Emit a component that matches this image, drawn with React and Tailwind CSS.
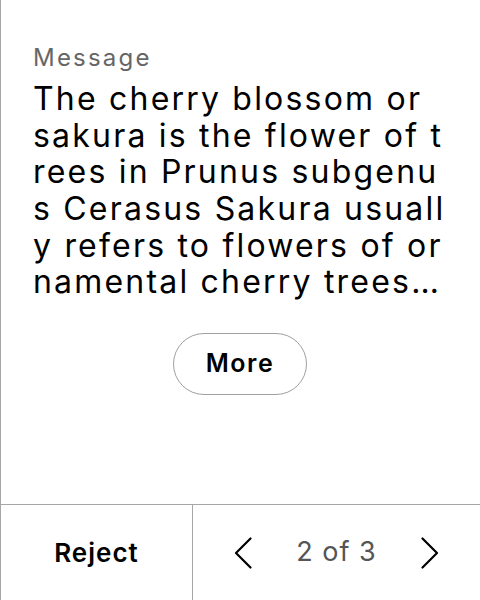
import React from "react";

const message =
  "The cherry blossom or sakura is the flower of trees in Prunus subgenus Cerasus Sakura usually refers to flowers of ornamental cherry trees, such as the Yoshino cherry, which are planted in Japan and many other places.";

function Chevron({ dir }) {
  return (
    <svg width="18" height="32" viewBox="0 0 18 32" fill="none" stroke="#000" strokeWidth={2.2} strokeLinecap="round" strokeLinejoin="round">
      {dir === "left" ? <path d="M16.5 1.5 L2 16 L16.5 30.5" /> : <path d="M1.5 1.5 L16 16 L1.5 30.5" />}
    </svg>
  );
}

export default function App() {
  return (
    <div className="w-[480px] h-[600px] flex flex-col bg-white border-l border-[#a6a6a6] font-['Inter',sans-serif]">
      <div className="flex-1 flex flex-col pl-[32px] pr-[33px] pt-[43px]">
        <p className="text-[24px] leading-[30px] tracking-[2.2px] text-[#666666]">Message</p>
        <p className="mt-[8px] text-[32px] leading-[36.67px] tracking-[2.2px] text-black break-all line-clamp-6">{message}</p>
        <div className="flex justify-center mt-[32px]">
          <button className="w-[134px] h-[62px] rounded-full border border-[#a0a0a0] text-[25px] tracking-[1.5px] font-semibold text-black">
            More
          </button>
        </div>
      </div>
      <div className="h-[96px] flex border-t border-[#a6a6a6]">
        <button className="w-[192px] border-r border-[#a6a6a6] flex items-center justify-center text-[26px] tracking-[1px] font-semibold text-black">
          Reject
        </button>
        <div className="flex-1 flex items-center justify-center gap-[44px]">
          <Chevron dir="left" />
          <span className="text-[27px] tracking-[1px] text-[#555555]">2 of 3</span>
          <Chevron dir="right" />
        </div>
      </div>
    </div>
  );
}
